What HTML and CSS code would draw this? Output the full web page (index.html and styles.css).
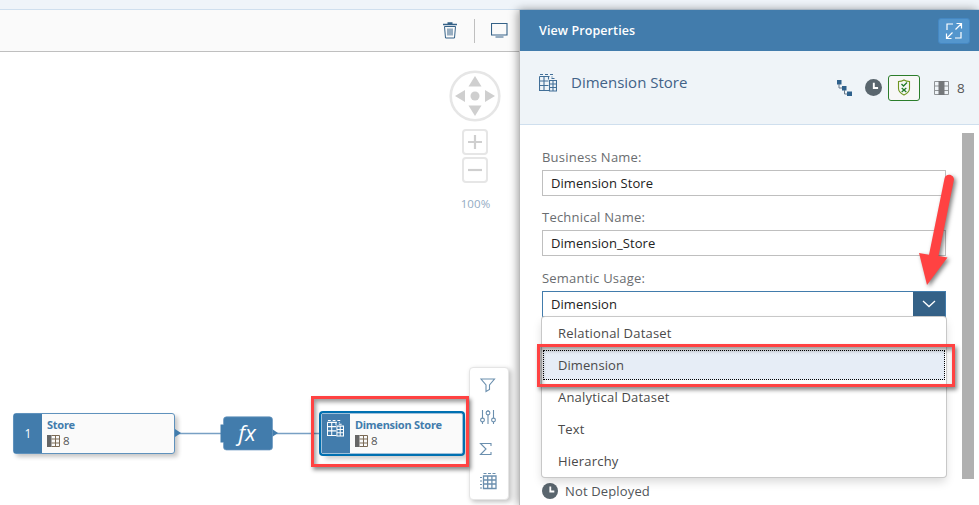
FILE: index.html
```html
<!DOCTYPE html>
<html lang="en">
<head>
<meta charset="utf-8">
<title>View Properties</title>
<link rel="stylesheet" href="styles.css">
</head>
<body>
<svg class="defs" aria-hidden="true">
  <symbol id="view" viewBox="0 0 18 18"><path d="M1 .5h3M6 .5h3M11 .5h3" stroke-width="1.2"/><path d="M.5 2.5h10M.5 2.5v14H10M.5 7h9M.5 11.500h9M5 2.500v14M9.500 2.500v3M13 3.500v-1"/><path d="M10.500 6.500h7v10.500h-7zM10.500 10h7M10.500 13.500h7M14 6.500v10.500M12.500 4.500h3" /></symbol>
  <symbol id="columns" viewBox="0 0 13 12"><path d="M0 0h4.500v12H0z" fill="#666" stroke="none"/><path d="M4.500.5h8v11h-8M4.500 4h8M4.500 8h8M8.500 0v12" fill="none" stroke="#7b6a55"/></symbol>
  <symbol id="clock" viewBox="0 0 16 16"><circle cx="8" cy="8" r="8" fill="#5a666e"/><path d="M8.300 3.500v5h4" fill="none" stroke="#fff" stroke-width="1.800"/></symbol>
</svg>
<div class="top-strip"></div>
<div class="workspace">
  <main class="editor">
    <div class="toolbar">
      <svg class="trash" width="16" height="17" viewBox="0 0 16 17"><path d="M1 2.500h14M5.500 1h5" stroke-width="1.400"/><path d="M2.500 4.500h11l-1 11.500h-9zM6 6.500v7M8 6.500v7M10 6.500v7"/></svg>
      <span class="divider"></span>
      <svg class="monitor" width="17" height="15" viewBox="0 0 17 15"><path d="M.5.5h15.500v11.500H.5zM4.500 14h8"/></svg>
    </div>
    <div class="canvas">
      <svg class="compass" width="52" height="52" viewBox="0 0 52 52"><circle cx="26" cy="26" r="24.300" fill="none" stroke="#e6e6e6" stroke-width="2.600"/><g fill="#cfcfcf"><circle cx="26" cy="26" r="4.500"/><path d="M26 6l6.500 10.500h-13zM26 46l6.500-10.500h-13zM6 26l10-6v12zM46 26l-10-6v12z"/></g></svg>
      <svg class="zoom zoom-in" width="26" height="26" viewBox="0 0 26 26"><rect x="1" y="1" width="24" height="24" rx="3"/><path d="M6 13h14M13 6v14"/></svg>
      <svg class="zoom zoom-out" width="26" height="26" viewBox="0 0 26 26"><rect x="1" y="1" width="24" height="24" rx="3"/><path d="M6 13h14"/></svg>
      <span class="zoom-level">100%</span>
      <div class="node store">
        <span class="node-tag">1</span>
        <div class="node-body"><b>Store</b><span class="count"><svg width="13" height="12"><use href="#columns"/></svg>8</span></div>
      </div>
      <svg class="links" width="146" height="36" viewBox="0 0 146 36"><path d="M0 17.500h46M100 17.500h45" stroke="#78a0c4" stroke-width="1.700"/><path d="M0 13l6 4-6 4zM97 13l6 4-6 4z" fill="#427cac"/><rect x="45.500" y="8.500" width="6" height="18" fill="#427cac"/><rect x="48.500" y=".8" width="49" height="33.200" rx="3" fill="#427cac" stroke="#6d9ac1" stroke-width=".7"/><path d="M47 9h4v17h-4z" fill="#427cac"/></svg>
      <i class="fx">fx</i>
      <div class="node dimension">
        <span class="node-tag"><svg class="line-icon" width="17" height="17"><use href="#view"/></svg></span>
        <div class="node-body"><b>Dimension Store</b><span class="count"><svg width="13" height="12"><use href="#columns"/></svg>8</span></div>
      </div>
      <div class="palette">
        <svg width="18" height="18" viewBox="0 0 18 18"><path d="M2 3h13.500l-5 6v4.500l-3.500 2V9z"/></svg>
        <svg width="18" height="18" viewBox="0 0 18 18"><path d="M3.500 2v8M3.500 14v2M9 2v1M9 7v9M14.500 2v8M14.500 14v2"/><circle cx="3.500" cy="12" r="1.900"/><circle cx="9" cy="5" r="1.900"/><circle cx="14.500" cy="12" r="1.900"/></svg>
        <svg width="18" height="18" viewBox="0 0 18 18"><path d="M12 6V3.500H1.500l5.500 5.500-5.500 5.500H12V12"/></svg>
        <svg width="18" height="18" viewBox="0 0 18 18"><path d="M4.500 1.500h3M9 1.500h3M13.500 1.500h3M1 5.500h2M1 9h2M1 12.500h2M1 16h2"/><path stroke-width="1.300" d="M4.500 4h12.500v12.500H4.500zM4.500 8h12.500M4.500 12h12.500M8.700 4v12M12.900 4v12"/></svg>
      </div>
    </div>
  </main>
  <aside class="panel">
    <div class="panel-title"><h2>View Properties</h2>
      <button class="expand" aria-label="Expand"><svg width="18" height="18" viewBox="0 0 18 18"><path d="M2 8V2h6M10 16h6v-6M10.500 7.500l6-6M11.500 1.500h5v5M7.500 10.500l-6 6M1.500 11.500v5h5"/></svg></button>
    </div>
    <header class="object-header">
      <svg class="line-icon" width="18" height="18"><use href="#view"/></svg>
      <h1>Dimension Store</h1>
      <svg class="tree" width="15" height="16" viewBox="0 0 15 16"><path d="M0 0h4.500v4.500H0zM5 6h4.500v4.500H5zM10 11.500h5V16h-5z" fill="#2f618c"/><path d="M2 4v4h3M7.500 10v4H10" fill="none" stroke="#68798a"/></svg>
      <svg class="clock" width="17" height="17"><use href="#clock"/></svg>
      <span class="validation"><svg width="14" height="17" viewBox="0 0 14 17"><path d="M7 1c2 1.300 3.500 1.500 5.500 1.500v7C12.500 13 9 15 7 16c-2-1-5.500-3-5.500-6.500v-7C3.500 2.500 5 2.300 7 1z"/><path class="marks" d="M4.500 5l2 2 3.500-3.500M4.700 9l4.600 4M9.300 9l-4.600 4"/></svg></span>
      <svg class="cols" width="15" height="14" viewBox="0 0 15 14"><path d="M.5.500h14v13H.5zM0 5h15M0 9.500h15" fill="none" stroke="#909497"/><path d="M4.500 0h6v14h-6z" fill="#74777a"/></svg>
      <span class="col-count">8</span>
    </header>
    <div class="form">
      <label>Business Name:</label><div class="field">Dimension Store</div>
      <label>Technical Name:</label><div class="field">Dimension_Store</div>
      <label class="usage">Semantic Usage:</label>
      <div class="field combo"><span>Dimension</span><span class="arrow"><svg width="14" height="8" viewBox="0 0 14 8"><path d="M1 1l6 5.500L13 1"/></svg></span>
        <ul class="options"><li>Relational Dataset</li><li class="selected">Dimension</li><li>Analytical Dataset</li><li>Text</li><li>Hierarchy</li></ul>
      </div>
      <div class="status"><svg width="16" height="16"><use href="#clock"/></svg>Not Deployed</div>
    </div>
    <div class="scrollbar"></div>
  </aside>
</div>
<div class="callout callout-node"></div>
<div class="callout callout-option"></div>
<svg class="pointer" width="50" height="125" viewBox="0 0 50 125"><path d="M34.500 8.500C35.500 3 43.800 4 44 9.500L28.500 86l9 1.600L17 115 9 83l10 1.700z"/></svg>
</body>
</html>
```
FILE: styles.css
```css
* { box-sizing: border-box; }
body { margin: 0; width: 979px; height: 505px; overflow: hidden; position: relative; background: #fff; color: #333; font: 13px/18px "Open Sans", "Liberation Sans", sans-serif; display: flex; flex-direction: column; }
h1, h2, ul { margin: 0; padding: 0; font-weight: 400; }
svg { display: block; flex: none; }
.defs { position: absolute; width: 0; height: 0; }
.top-strip { height: 10px; flex: none; background: #eff4f9; border-bottom: 1px solid #cfdfee; }
.workspace { display: flex; flex: 1; min-height: 0; }
.editor { width: 520px; display: flex; flex-direction: column; }
.toolbar { height: 42px; flex: none; display: flex; align-items: center; justify-content: flex-end; padding-right: 12px; background: #fafafa; border-bottom: 1px solid #bfbfbf; }
.toolbar svg { fill: none; stroke: #346187; }
.trash { margin-right: 16px; }
.monitor { stroke-width: 1.1; margin-left: 16px; }
.divider { width: 1px; height: 24px; background: #bfbfbf; }
.canvas { flex: 1; position: relative; }
.compass { position: absolute; left: 449px; top: 18px; }
.zoom { position: absolute; left: 462px; fill: none; stroke: #e6e6e6; stroke-width: 2; }
.zoom path { stroke: #cfcfcf; stroke-width: 2.200; }
.zoom-in { top: 77px; }
.zoom-out { top: 105px; }
.zoom-level { position: absolute; left: 450px; width: 51px; top: 143px; text-align: center; font-size: 11.500px; color: #93abc3; letter-spacing: .1px; }
.node { position: absolute; display: flex; background: #fafafa; border: 1px solid #5f92bd; border-radius: 3px; box-shadow: 3px 3px 4px rgba(0,0,0,.22); }
.store { left: 13px; top: 361px; width: 162px; height: 41px; }
.dimension { left: 321px; top: 361px; width: 142px; height: 41px; border-color: #9fc0da; border-radius: 2px; box-shadow: 0 0 0 2px #0070b1, 4px 5px 5px rgba(0,0,0,.2); }
.node-tag { width: 28px; background: #427cac; color: #fff; display: flex; align-items: center; justify-content: center; font-size: 12px; }
.dimension .node-tag { align-items: flex-start; padding: 6px 2px 0 0; }
.node-body { padding: 2px 0 0 5px; font-size: 11.500px; line-height: 18px; }
.node-body b { display: block; color: #427cac; font: 700 11px/18px "Noto Sans", sans-serif; letter-spacing: -.25px; }
.count { display: flex; align-items: center; height: 15px; margin-top: -1px; gap: 3px; color: #555; }
.line-icon { fill: none; stroke: #426f98; stroke-width: 1.100; }
.node .line-icon { stroke: #fff; }
.links { position: absolute; left: 175px; top: 364px; }
.fx { position: absolute; left: 223px; top: 367px; width: 48px; text-align: center; color: #fff; font: italic 22px/26px "Open Sans", sans-serif; }
.palette { position: absolute; left: 469px; top: 315px; width: 40px; height: 133px; display: flex; flex-direction: column; align-items: center; justify-content: space-between; padding: 8px 1px 9px 0; background: #fff; border: 1px solid #e5e5e5; border-radius: 4px; box-shadow: 2px 2px 5px rgba(0,0,0,.25); }
.palette svg { fill: none; stroke: #6b8fae; stroke-width: 1.100; margin-left: -1px; }
.panel { width: 459px; position: relative; background: #fff; box-shadow: -1px 0 0 #bbb, -2px 0 9px rgba(0,0,0,.4); display: flex; flex-direction: column; }
.panel-title { height: 41px; flex: none; background: #427cac; display: flex; align-items: center; padding: 0 9px 0 19px; justify-content: space-between; }
h2 { color: #fff; font-size: 12.500px; font-weight: 600; letter-spacing: .1px; }
.expand { width: 32px; height: 26px; padding: 0; border: 1px solid #4588c3; border-radius: 3px; background: #5496cd; display: grid; place-items: center; }
.expand svg { fill: none; stroke: #fff; stroke-width: 1.200; }
.object-header { height: 74px; flex: none; background: #eff4f8; border-bottom: 1px solid #cfdfee; display: flex; align-items: center; padding: 0 15px 0 19px; }
.object-header > .line-icon { margin-bottom: 9px; }
h1 { color: #426287; font-size: 15px; line-height: 20px; margin: 0 auto 11px 14px; }
.tree { margin-right: 13px; }
.clock { margin-right: 6px; }
.validation { width: 32px; height: 26px; border: 1px solid #2b7d2b; border-radius: 3px; background: #f7f7f7; display: grid; place-items: center; margin-right: 14px; }
.validation svg { fill: none; stroke: #6f9620; stroke-width: 1.100; }
.validation .marks { stroke: #207b28; stroke-width: 1.300; }
.col-count { color: #555; margin-left: 8px; width: 7px; font-size: 13.500px; }
.form { margin: 23px 33px 0 22px; }
label { display: block; height: 22px; line-height: 19px; color: #6a6d70; letter-spacing: .22px; }
.field { height: 26px; border: 1px solid #bfbfbf; padding: 0 8px; line-height: 25px; color: #222; margin-bottom: 12px; letter-spacing: .08px; }
.usage { margin-top: 13px; }
.combo { position: relative; border-color: #427cac; display: flex; justify-content: space-between; padding-right: 0; margin: 0; }
.arrow { width: 32px; height: 24px; background: #346187; display: grid; place-items: center; }
.arrow svg { fill: none; stroke: #fff; stroke-width: 1.300; }
.options { position: absolute; left: -1px; top: 25px; width: 404px; height: 160px; background: #fff; list-style: none; border-radius: 3px; box-shadow: 0 0 0 1px #c8c8c8, 0 5px 10px rgba(0,0,0,.15); color: #4a4a4a; z-index: 1; letter-spacing: .2px; }
.options li { height: 32px; line-height: 32px; padding-left: 16px; }
.options .selected { margin: 1px; height: 30px; line-height: 29px; padding-left: 14px; background: #e6edf6; border: 1px dotted #000; letter-spacing: .08px; }
.status { display: flex; align-items: center; gap: 7px; margin-top: 165px; color: #515559; letter-spacing: .15px; }
.scrollbar { position: absolute; left: 442px; top: 123px; width: 12px; height: 346px; background: #b0b0b0; }
.callout { position: absolute; border: 3px solid #ff4242; box-shadow: 2px 3px 4px rgba(0,0,0,.45), inset 2px 3px 4px rgba(0,0,0,.4); z-index: 2; }
.callout-node { left: 311px; top: 396px; width: 158px; height: 71px; }
.callout-option { left: 537px; top: 344px; width: 418px; height: 43px; }
.pointer { position: absolute; left: 910px; top: 170px; fill: #ff4242; filter: drop-shadow(2px 2px 2px rgba(0,0,0,.5)); z-index: 3; }
```
